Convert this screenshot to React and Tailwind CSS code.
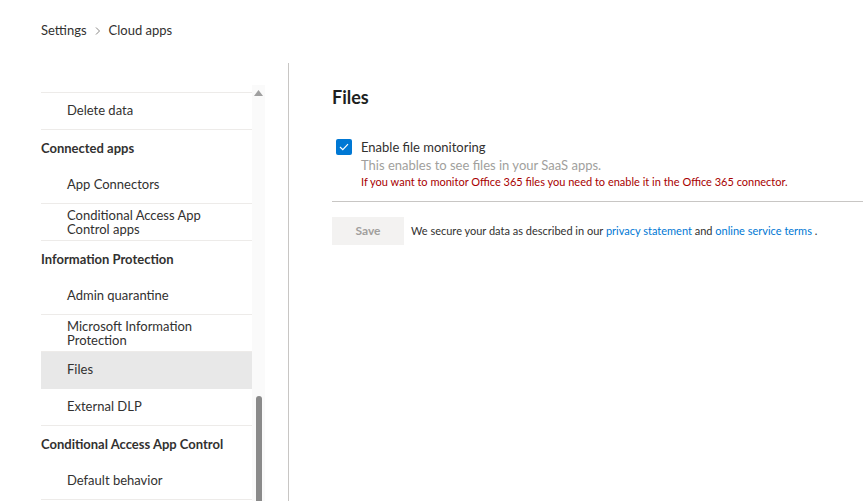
import React from 'react';

const font = { fontFamily: '"Segoe UI", Lato, "Open Sans", sans-serif' };

function NavItem({ children, selected, twoLine }) {
  return (
    <div
      className={`h-[37px] flex items-center pl-[26px] border-b border-[#edebe9] text-[13px] text-[#323130] ${
        selected ? 'bg-[#e8e8e8] border-b-transparent' : ''
      } ${twoLine ? 'leading-[14px]' : ''}`}
    >
      <span>{children}</span>
    </div>
  );
}

function NavHeader({ children }) {
  return (
    <div className="h-[37px] flex items-center text-[13px] font-bold text-[#323130]">{children}</div>
  );
}

export default function App() {
  return (
    <div className="w-[863px] h-[501px] overflow-hidden bg-white" style={font}>
      <div className="pl-[41px] pt-[21px] flex items-start gap-[6px] text-[13px] text-[#323130] h-[63px]">
        <span>Settings</span>
        <svg width="10" height="10" viewBox="0 0 10 10" className="mt-[5px]">
          <path d="M3 1.5 L6.5 5 L3 8.5" fill="none" stroke="#8a8886" strokeWidth="1" />
        </svg>
        <span>Cloud apps</span>
      </div>

      <div className="flex h-[438px]">
        <div className="pl-[41px] flex">
          <div className="w-[211px] pt-[29px]">
            <div className="border-t border-[#edebe9]">
              <NavItem>Delete data</NavItem>
              <NavHeader>Connected apps</NavHeader>
              <NavItem>App Connectors</NavItem>
              <NavItem twoLine>
                Conditional Access App
                <br />
                Control apps
              </NavItem>
              <NavHeader>Information Protection</NavHeader>
              <NavItem>Admin quarantine</NavItem>
              <NavItem twoLine>
                Microsoft Information
                <br />
                Protection
              </NavItem>
              <NavItem selected>Files</NavItem>
              <NavItem>External DLP</NavItem>
              <NavHeader>Conditional Access App Control</NavHeader>
              <NavItem>Default behavior</NavItem>
            </div>
          </div>
          <div className="w-[13px] bg-[#fafafa] mt-[22px] flex flex-col items-center">
            <svg width="9" height="6" viewBox="0 0 9 6" className="mt-[5px]">
              <path d="M4.5 0 L9 6 L0 6 Z" fill="#a0a0a0" />
            </svg>
            <div className="flex-1" />
            <div className="w-[6px] h-[105px] bg-[#8a8a8a] rounded-t-[3px]" />
          </div>
        </div>
        <div className="w-[1px] bg-[#c8c6c4] ml-[23px]" />

        <div className="flex-1 pl-[43px] pt-[22px]">
          <h1 className="text-[18px] font-bold text-[#201f1e] leading-[24px]">Files</h1>
          <div className="flex mt-[29px] pl-[4px]">
            <div className="w-[16px] h-[16px] bg-[#0078d4] rounded-[2px] flex items-center justify-center mt-[1px]">
              <svg width="10" height="8" viewBox="0 0 10 8">
                <path d="M1 4 L3.8 6.6 L9 1.2" fill="none" stroke="white" strokeWidth="1.2" />
              </svg>
            </div>
            <div className="pl-[9px]">
              <div className="text-[13px] text-[#323130] leading-[18px]">Enable file monitoring</div>
              <div className="text-[13px] text-[#a19f9d] leading-[18px]">This enables to see files in your SaaS apps.</div>
              <div className="text-[11px] text-[#a80000] leading-[16px]">
                If you want to monitor Office 365 files you need to enable it in the Office 365 connector.
              </div>
            </div>
          </div>
          <div className="h-[1px] bg-[#c8c6c4] mt-[11px]" />
          <div className="flex items-center mt-[15px] gap-[7px]">
            <div className="w-[72px] h-[28px] bg-[#f3f2f1] flex items-center justify-center text-[12px] font-bold text-[#a19f9d]">
              Save
            </div>
            <div className="text-[11px] text-[#323130]">
              We secure your data as described in our{' '}
              <span className="text-[#0078d4]">privacy statement</span> and{' '}
              <span className="text-[#0078d4]">online service terms</span> .
            </div>
          </div>
        </div>
      </div>
    </div>
  );
}
